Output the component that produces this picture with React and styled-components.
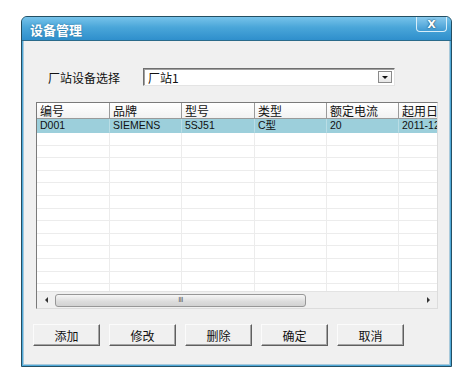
import React from "react";
import styled, { createGlobalStyle } from "styled-components";

const Global = createGlobalStyle`
  html, body {
    margin: 0;
    padding: 0;
    background: #ffffff;
  }
  body {
    font-family: "Liberation Sans", "Noto Sans CJK SC", sans-serif;
  }
`;

const Page = styled.div`
  padding: 16px 0 0 21px;
`;

const Window = styled.div`
  width: 431px;
  height: 351px;
  box-sizing: border-box;
  border: 1px solid #244f63;
  border-radius: 6px 6px 0 0;
  display: flex;
  flex-direction: column;
  background: #4fa9d9;
  overflow: hidden;
`;

const TitleBar = styled.div`
  height: 23px;
  flex: none;
  display: flex;
  align-items: center;
  justify-content: space-between;
  padding: 0 4px 0 8px;
  background: linear-gradient(to bottom, #77c3ea 0%, #4aa6d9 45%, #2f8fcc 100%);
  border-bottom: 1px solid #2a6a8a;
`;

const Title = styled.span`
  color: #ffffff;
  font-family: "Noto Sans CJK SC", sans-serif;
  font-size: 13px;
  font-weight: 700;
  text-shadow: 0 0 2px #2a6f98;
  margin-top: 2px;
`;

const CloseButton = styled.div`
  align-self: flex-start;
  width: 31px;
  height: 15px;
  box-sizing: border-box;
  border: 1px solid #d8eef9;
  border-top: none;
  border-radius: 0 0 4px 4px;
  background: linear-gradient(to bottom, #8acbee, #3f9ad2);
  display: flex;
  align-items: center;
  justify-content: center;
  color: #ffffff;
  font-family: "DejaVu Sans", sans-serif;
  font-weight: 700;
  font-size: 11px;
  text-shadow: 0 0 2px #1b4f70, 0 0 1px #1b4f70;
`;

const Client = styled.div`
  flex: 1;
  background: #f0f0f0;
  margin: 0 1px 1px 1px;
  border: 1px solid #a9c9da;
  border-top: none;
  display: flex;
  flex-direction: column;
`;

const SelectRow = styled.div`
  display: flex;
  align-items: center;
  margin-top: 27px;
  padding-left: 12px;
`;

const Label = styled.span`
  width: 95px;
  padding-left: 12px;
  font-family: "Noto Sans CJK SC", sans-serif;
  font-size: 12px;
  color: #111;
`;

const Combo = styled.div`
  width: 252px;
  height: 18px;
  box-sizing: border-box;
  border: 1px solid;
  border-color: #6f6f6f #e4e4e4 #e4e4e4 #6f6f6f;
  box-shadow: inset 1px 1px 0 #a0a0a0;
  background: #ffffff;
  display: flex;
  align-items: center;
  justify-content: space-between;
  padding: 0 2px 0 4px;
`;

const ComboText = styled.span`
  font-family: "Noto Sans CJK SC", sans-serif;
  font-size: 12px;
  color: #111;
`;

const ComboArrow = styled.div`
  width: 14px;
  height: 12px;
  box-sizing: border-box;
  border: 1px solid #8a8a8a;
  background: linear-gradient(#ffffff, #e6e6e6);
  display: flex;
  align-items: center;
  justify-content: center;
  &::after {
    content: "";
    border-left: 3px solid transparent;
    border-right: 3px solid transparent;
    border-top: 3px solid #111;
  }
`;

const Grid = styled.div`
  margin: 16px 0 0 12px;
  width: 402px;
  height: 207px;
  box-sizing: border-box;
  border: 1px solid #7a7a7a;
  border-right-color: #dcdcdc;
  border-bottom-color: #dcdcdc;
  background: #ffffff;
  display: flex;
  flex-direction: column;
  overflow: hidden;
`;

const TableArea = styled.div`
  flex: 1;
  overflow: hidden;
`;

const Table = styled.div`
  display: grid;
  grid-template-columns: 73px 72px 73px 72px 72px 80px;
  width: 442px;
`;

const HeadCell = styled.div`
  height: 16px;
  box-sizing: border-box;
  border-right: 1px solid #9a9a9a;
  border-bottom: 1px solid #9a9a9a;
  background: linear-gradient(#ffffff, #f2f2f2);
  padding: 0 3px;
  font-family: "Noto Sans CJK SC", sans-serif;
  font-size: 12px;
  line-height: 15px;
  color: #111;
  white-space: nowrap;
  overflow: hidden;
`;

const Cell = styled.div`
  height: ${p => (p.selected ? "14px" : "12.6px")};
  box-sizing: border-box;
  border-right: 1px solid ${p => (p.selected ? "#b9dde5" : "#ececec")};
  border-bottom: 1px solid ${p => (p.selected ? "#9ccfdb" : "#ececec")};
  background: ${p => (p.selected ? "#9ccfdb" : "#ffffff")};
  padding: 0 3px;
  font-family: "Liberation Sans", "Noto Sans CJK SC", sans-serif;
  font-size: 10.5px;
  line-height: 13px;
  color: #111;
  white-space: nowrap;
  overflow: hidden;
`;

const ScrollBar = styled.div`
  height: 16px;
  flex: none;
  display: flex;
  align-items: center;
  background: #f0f0f0;
  border-top: 1px solid #e3e3e3;
  padding: 0 2px;
`;

const ArrowBtn = styled.div`
  width: 14px;
  height: 14px;
  display: flex;
  align-items: center;
  justify-content: center;
  &::after {
    content: "";
    border-top: 3px solid transparent;
    border-bottom: 3px solid transparent;
    ${p => (p.dir === "left" ? "border-right: 3px solid #333;" : "border-left: 3px solid #333;")}
  }
`;

const Track = styled.div`
  flex: 1;
  height: 14px;
  display: flex;
  align-items: center;
  padding-left: 2px;
`;

const Thumb = styled.div`
  width: 251px;
  height: 13px;
  box-sizing: border-box;
  border: 1px solid #979797;
  border-radius: 3px;
  background: linear-gradient(#f6f6f6, #dcdcdc 60%, #d2d2d2);
  display: flex;
  align-items: center;
  justify-content: center;
  font-family: "DejaVu Sans", sans-serif;
  font-size: 7px;
  letter-spacing: -0.5px;
  color: #555;
`;

const ButtonRow = styled.div`
  display: flex;
  gap: 9px;
  margin: 15px 0 0 9px;
`;

const Button = styled.div`
  width: 67px;
  height: 22px;
  box-sizing: border-box;
  border: 1px solid;
  border-color: #fbfbfb #5f5f5f #5f5f5f #fbfbfb;
  box-shadow: inset -1px -1px 0 #a5a5a5;
  background: #f0f0f0;
  display: flex;
  align-items: center;
  justify-content: center;
  font-family: "Noto Sans CJK SC", sans-serif;
  font-size: 12px;
  color: #111;
`;

const columns = ["编号", "品牌", "型号", "类型", "额定电流", "起用日期"];
const record = ["D001", "SIEMENS", "5SJ51", "C型", "20", "2011-12-01"];
const emptyRows = Array.from({ length: 13 });

export default function App() {
  return (
    <Page>
      <Global />
      <Window>
        <TitleBar>
          <Title>设备管理</Title>
          <CloseButton>X</CloseButton>
        </TitleBar>
        <Client>
          <SelectRow>
            <Label>厂站设备选择</Label>
            <Combo>
              <ComboText>厂站1</ComboText>
              <ComboArrow />
            </Combo>
          </SelectRow>
          <Grid>
            <TableArea>
              <Table>
                {columns.map(c => (
                  <HeadCell key={c}>{c}</HeadCell>
                ))}
                {record.map((v, i) => (
                  <Cell key={"r" + i} selected>
                    {v}
                  </Cell>
                ))}
                {emptyRows.map((_, r) =>
                  columns.map((c, i) => <Cell key={r + "-" + i} />)
                )}
              </Table>
            </TableArea>
            <ScrollBar>
              <ArrowBtn dir="left" />
              <Track>
                <Thumb>III</Thumb>
              </Track>
              <ArrowBtn dir="right" />
            </ScrollBar>
          </Grid>
          <ButtonRow>
            <Button>添加</Button>
            <Button>修改</Button>
            <Button>删除</Button>
            <Button>确定</Button>
            <Button>取消</Button>
          </ButtonRow>
        </Client>
      </Window>
    </Page>
  );
}
